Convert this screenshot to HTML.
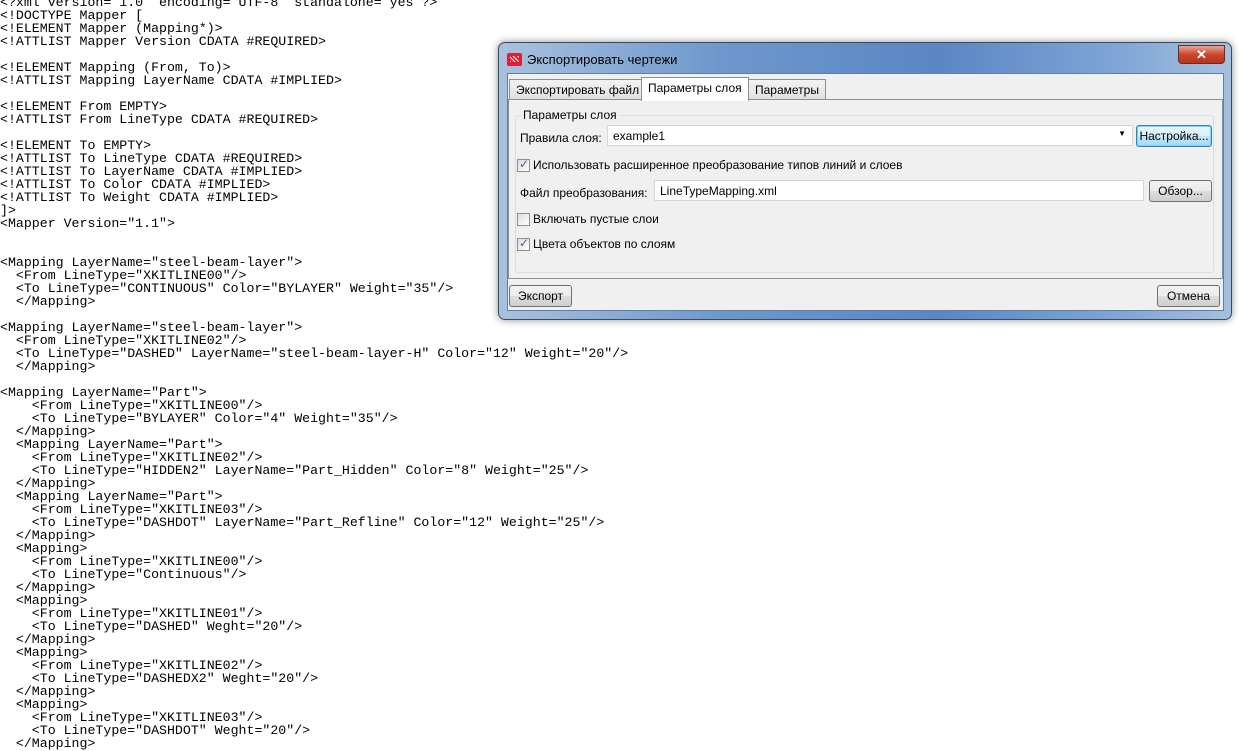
<!DOCTYPE html>
<html><head><meta charset="utf-8"><style>
*{margin:0;padding:0;box-sizing:border-box}
body{width:1249px;height:749px;overflow:hidden;background:#fff;position:relative}
pre{position:absolute;left:0;top:-4px;font-family:"Liberation Mono",monospace;font-size:13.25px;line-height:13px;color:#000}
.dlg{position:absolute;left:498px;top:42px;width:734px;height:278px;border:1px solid #3a4a60;border-radius:7px;background:linear-gradient(90deg,#a9c1de 0%,#6e98cc 30%,#5a86c3 60%,#7fa6d6 85%,#a6c0df 100%);box-shadow:0 0 8px rgba(0,0,0,.45)}
.ttl{position:absolute;left:28px;top:9px;font:13px "Liberation Sans","Noto Sans CJK SC",sans-serif;color:#000}
.ico{position:absolute;left:8px;top:10px;width:15px;height:13px;background:#d9213a;border-radius:2px}
.ico:after{content:"";position:absolute;left:3px;top:3px;width:9px;height:6px;background:repeating-linear-gradient(45deg,#fff 0 1px,transparent 1px 3px)}
.cls{position:absolute;left:679px;top:2px;width:47px;height:19px;border:1px solid #6b2b22;border-radius:0 0 4px 4px;background:linear-gradient(#e8a597,#c9482e 50%,#b8341c);color:#fff;font:bold 13px "Liberation Sans",sans-serif;text-align:center;line-height:17px}
.cli{position:absolute;left:8px;top:30px;width:717px;height:238px;background:#f0f0f0;border:1px solid #5f7ea8}
.f{font:12px "Liberation Sans","Noto Sans CJK SC",sans-serif;color:#000;position:absolute;white-space:nowrap}
.tab{position:absolute;top:5px;height:21px;border:1px solid #8e8f8f;border-bottom:none;background:linear-gradient(#f2f2f2,#e0e0e0);padding:3px 6px}
.tab.a{top:3px;height:24px;background:#fff;z-index:2}
.pane{position:absolute;left:0px;top:25px;width:715px;height:180px;border:1px solid #8e8f8f;background:#f0f0f0}
.grp{position:absolute;left:6px;top:15px;width:699px;height:158px;border:1px solid #d5dfe5;border-radius:3px}
.inp{position:absolute;background:#fff;border:1px solid #cfd6dc;height:21px;padding:3px 5px}
.btn{position:absolute;height:22px;border:1px solid #707070;border-radius:3px;background:linear-gradient(#f2f2f2 0,#ebebeb 50%,#dddddd 51%,#cfcfcf);text-align:center;line-height:20px}
.cb{position:absolute;width:13px;height:13px;border:1px solid #8f8f8f;background:linear-gradient(135deg,#dcdcdc,#fff)}
.cb.c:after{content:"✓";position:absolute;left:1px;top:-3px;font:bold 12px "DejaVu Sans",sans-serif;color:#4a5f97}
</style></head><body>
<pre>&lt;?xml version= 1.0  encoding= UTF-8  standalone= yes ?&gt;
&lt;!DOCTYPE Mapper [
&lt;!ELEMENT Mapper (Mapping*)&gt;
&lt;!ATTLIST Mapper Version CDATA #REQUIRED&gt;

&lt;!ELEMENT Mapping (From, To)&gt;
&lt;!ATTLIST Mapping LayerName CDATA #IMPLIED&gt;

&lt;!ELEMENT From EMPTY&gt;
&lt;!ATTLIST From LineType CDATA #REQUIRED&gt;

&lt;!ELEMENT To EMPTY&gt;
&lt;!ATTLIST To LineType CDATA #REQUIRED&gt;
&lt;!ATTLIST To LayerName CDATA #IMPLIED&gt;
&lt;!ATTLIST To Color CDATA #IMPLIED&gt;
&lt;!ATTLIST To Weight CDATA #IMPLIED&gt;
]&gt;
&lt;Mapper Version="1.1"&gt;


&lt;Mapping LayerName="steel-beam-layer"&gt;
  &lt;From LineType="XKITLINE00"/&gt;
  &lt;To LineType="CONTINUOUS" Color="BYLAYER" Weight="35"/&gt;
  &lt;/Mapping&gt;

&lt;Mapping LayerName="steel-beam-layer"&gt;
  &lt;From LineType="XKITLINE02"/&gt;
  &lt;To LineType="DASHED" LayerName="steel-beam-layer-H" Color="12" Weight="20"/&gt;
  &lt;/Mapping&gt;

&lt;Mapping LayerName="Part"&gt;
    &lt;From LineType="XKITLINE00"/&gt;
    &lt;To LineType="BYLAYER" Color="4" Weight="35"/&gt;
  &lt;/Mapping&gt;
  &lt;Mapping LayerName="Part"&gt;
    &lt;From LineType="XKITLINE02"/&gt;
    &lt;To LineType="HIDDEN2" LayerName="Part_Hidden" Color="8" Weight="25"/&gt;
  &lt;/Mapping&gt;
  &lt;Mapping LayerName="Part"&gt;
    &lt;From LineType="XKITLINE03"/&gt;
    &lt;To LineType="DASHDOT" LayerName="Part_Refline" Color="12" Weight="25"/&gt;
  &lt;/Mapping&gt;
  &lt;Mapping&gt;
    &lt;From LineType="XKITLINE00"/&gt;
    &lt;To LineType="Continuous"/&gt;
  &lt;/Mapping&gt;
  &lt;Mapping&gt;
    &lt;From LineType="XKITLINE01"/&gt;
    &lt;To LineType="DASHED" Weght="20"/&gt;
  &lt;/Mapping&gt;
  &lt;Mapping&gt;
    &lt;From LineType="XKITLINE02"/&gt;
    &lt;To LineType="DASHEDX2" Weght="20"/&gt;
  &lt;/Mapping&gt;
  &lt;Mapping&gt;
    &lt;From LineType="XKITLINE03"/&gt;
    &lt;To LineType="DASHDOT" Weght="20"/&gt;
  &lt;/Mapping&gt;</pre>
<div class="dlg">
 <div class="ico"></div>
 <div class="ttl">Экспортировать чертежи</div>
 <div class="cls">✕</div>
 <div class="cli">
  <div class="f tab" style="left:1px">Экспортировать файл</div>
  <div class="f tab a" style="left:133px">Параметры слоя</div>
  <div class="f tab" style="left:240px">Параметры</div>
  <div class="pane">
   <div class="grp"></div>
   <div class="f" style="left:12px;top:8px;background:#f0f0f0;padding:0 2px">Параметры слоя</div>
   <div class="f" style="left:11px;top:31px">Правила слоя:</div>
   <div class="f inp" style="left:98px;top:25px;width:526px">example1<span style="position:absolute;right:6px;top:3px;font-size:8px">▼</span></div>
   <div class="f btn" style="left:627px;top:25px;width:76px;border-color:#3c7fb1;background:linear-gradient(#eaf6fd,#d9f0fc 50%,#bee6fd 51%,#a7d9f5);box-shadow:inset 0 0 0 1px #7cd3f7">Настройка...</div>
   <div class="cb c" style="left:8px;top:59px"></div>
   <div class="f" style="left:24px;top:58px">Использовать расширенное преобразование типов линий и слоев</div>
   <div class="f" style="left:11px;top:86px">Файл преобразования:</div>
   <div class="f inp" style="left:145px;top:80px;width:490px">LineTypeMapping.xml</div>
   <div class="f btn" style="left:640px;top:80px;width:63px">Обзор...</div>
   <div class="cb" style="left:8px;top:113px"></div>
   <div class="f" style="left:24px;top:112px">Включать пустые слои</div>
   <div class="cb c" style="left:8px;top:138px"></div>
   <div class="f" style="left:24px;top:137px">Цвета объектов по слоям</div>
  </div>
  <div class="f btn" style="left:1px;top:211px;width:63px">Экспорт</div>
  <div class="f btn" style="left:649px;top:211px;width:63px">Отмена</div>
 </div>
</div>
</body></html>
